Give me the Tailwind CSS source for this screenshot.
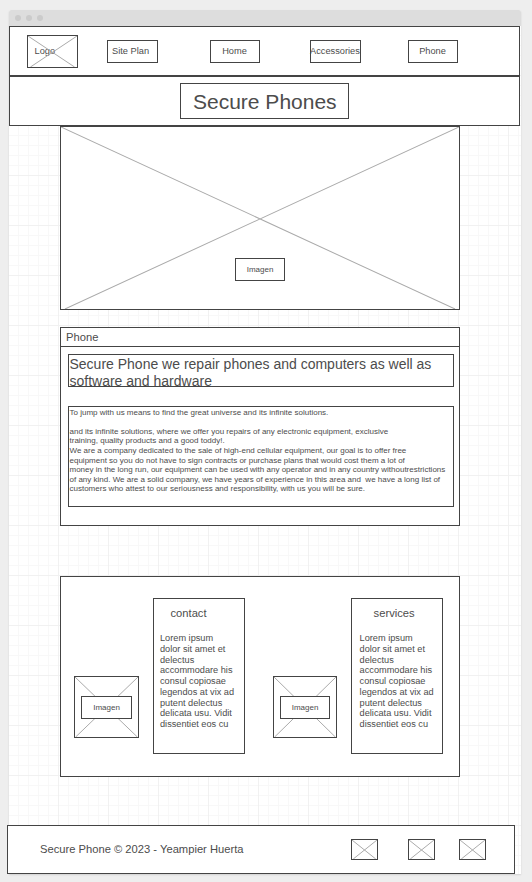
<!DOCTYPE html>
<html lang="en">
<head>
<meta charset="utf-8">
<title>Secure Phones</title>
<script src="https://cdn.jsdelivr.net/npm/@tailwindcss/browser@4"></script>
</head>
<body class="h-[882px] w-[532px] overflow-hidden bg-[#eeeeee] pt-[10px] font-['Liberation_Sans',Arial,sans-serif] text-[#4c4c4c]">
<svg class="hidden">
  <symbol id="cross" viewBox="0 0 100 100" preserveAspectRatio="none">
    <path d="M0 0L99 100M100 0L1 100" fill="none" stroke="#aaaaaa" stroke-width="1" vector-effect="non-scaling-stroke"/>
  </symbol>
  <symbol id="cross-small" viewBox="0 0 100 100" preserveAspectRatio="none">
    <path d="M0 0L95 100M100 0L5 100" fill="none" stroke="#aaaaaa" stroke-width="1" vector-effect="non-scaling-stroke"/>
  </symbol>
</svg>
<div class="ml-[9px] flex h-[864px] w-[512px] flex-col rounded-t-[2px] bg-white bg-[linear-gradient(to_right,#f1f1f1_1px,transparent_1px),linear-gradient(to_bottom,#f1f1f1_1px,transparent_1px),linear-gradient(to_right,#f8f8f8_1px,transparent_1px),linear-gradient(to_bottom,#f8f8f8_1px,transparent_1px)] bg-[size:50px_50px,50px_50px,10px_10px,10px_10px] bg-[position:-1px_15px,-1px_15px,-1px_5px,-1px_5px] shadow-[0_1px_2px_rgba(0,0,0,0.12)]">
  <div class="flex h-4 shrink-0 items-center gap-[5px] rounded-t-[2px] bg-[#dddddd] pl-[6px]">
    <span class="size-[6px] rounded-full bg-[#cbcbcb]"></span>
    <span class="size-[6px] rounded-full bg-[#cbcbcb]"></span>
    <span class="size-[6px] rounded-full bg-[#cbcbcb]"></span>
  </div>

  <nav class="flex h-[50px] w-[511px] shrink-0 items-start border border-[#444444] bg-white pl-[17px] pt-[8px] text-[9.25px] leading-[11px]">
    <div class="grid h-[33px] w-[51px] border border-[#444444]">
      <span class="col-start-1 row-start-1 pl-[6.5px] pt-[10px]">Logo</span>
      <svg class="col-start-1 row-start-1 h-full w-full"><use href="#cross-small"/></svg>
    </div>
    <a class="ml-[29px] mt-[5px] h-[23px] w-[51px] whitespace-nowrap border border-[#444444] pl-[4px] pt-[5px]">Site Plan</a>
    <a class="ml-[52px] mt-[5px] h-[23px] w-[50px] border border-[#444444] pr-px pt-[5px] text-center">Home</a>
    <a class="ml-[50px] mt-[5px] h-[23px] w-[51px] whitespace-nowrap border border-[#444444] pt-[5px]"><span class="-ml-px">Accessories</span></a>
    <a class="ml-[47px] mt-[5px] h-[23px] w-[50px] border border-[#444444] pr-px pt-[5px] text-center">Phone</a>
  </nav>

  <header class="h-[50px] w-[511px] shrink-0 border border-[#444444] bg-white pl-[170px] pt-[6px]">
    <h1 class="h-[36px] w-[169px] whitespace-nowrap border border-[#444444] pl-[12px] pt-[6px] text-[21px] leading-[24px]">Secure Phones</h1>
  </header>

  <main class="ml-[51px] flex w-[400px] flex-col">
    <section class="grid h-[184px] border border-[#444444] bg-white">
      <svg class="col-start-1 row-start-1 h-[182px] w-full"><use href="#cross"/></svg>
      <div class="col-start-1 row-start-1 ml-[174px] mt-[131px] h-[23px] w-[50px] border border-[#444444] bg-white pt-[6px] text-center text-[8px] leading-[10px]">Imagen</div>
    </section>

    <section class="mt-[17px] h-[199px] border border-[#444444] bg-white">
      <div class="h-[19px] border-b border-[#444444] pl-[5px] pt-[3px] text-[11.2px] leading-[13px]">Phone</div>
      <h2 class="ml-[7px] mt-[7px] h-[33px] w-[386px] whitespace-nowrap border border-[#444444] pl-[0.5px] pt-px text-[14px] leading-[17px]">Secure Phone we repair phones and computers as well as<br>software and hardware</h2>
      <p class="ml-[7px] mt-[19px] h-[101px] w-[386px] whitespace-pre border border-[#444444] pl-[0.5px] pt-[0.6px] text-[8px] leading-[9.6px]">To jump with us means to find the great universe and its infinite solutions.

and its infinite solutions, where we offer you repairs of any electronic equipment, exclusive
training, quality products and a good toddy!.
We are a company dedicated to the sale of high-end cellular equipment, our goal is to offer free
equipment so you do not have to sign contracts or purchase plans that would cost them a lot of
money in the long run, our equipment can be used with any operator and in any country withoutrestrictions
of any kind. We are a solid company, we have years of experience in this area and  we have a long list of
customers who attest to our seriousness and responsibility, with us you will be sure.</p>
    </section>

    <section class="mt-[50px] flex h-[201px] items-start border border-[#444444] bg-white pt-[21px]">
      <div class="ml-[13px] mt-[78px] grid h-[62px] w-[65px] border border-[#444444]">
        <svg class="col-start-1 row-start-1 h-[60px] w-full"><use href="#cross"/></svg>
        <div class="col-start-1 row-start-1 ml-[6px] mt-[19px] h-[23px] w-[51px] border border-[#444444] bg-white pt-[6px] text-center text-[8px] leading-[10px]">Imagen</div>
      </div>
      <article class="ml-[14px] h-[156px] w-[92px] whitespace-nowrap border border-[#444444] pl-[6px] pt-[8px]">
        <h3 class="pl-[10.5px] text-[11.2px] leading-[13px]">contact</h3>
        <p class="mt-[13px] text-[9.2px] leading-[10.75px]">Lorem ipsum<br>dolor sit amet et<br>delectus<br>accommodare his<br>consul copiosae<br>legendos at vix ad<br>putent delectus<br>delicata usu. Vidit<br>dissentiet eos cu</p>
      </article>
      <div class="ml-[28px] mt-[78px] grid h-[62px] w-[64px] border border-[#444444]">
        <svg class="col-start-1 row-start-1 h-[60px] w-full"><use href="#cross"/></svg>
        <div class="col-start-1 row-start-1 ml-[6px] mt-[19px] h-[23px] w-[50px] border border-[#444444] bg-white pt-[6px] text-center text-[8px] leading-[10px]">Imagen</div>
      </div>
      <article class="ml-[14px] h-[156px] w-[92px] whitespace-nowrap border border-[#444444] pl-[7.6px] pt-[8px]">
        <h3 class="pl-[14px] text-[11.2px] leading-[13px]">services</h3>
        <p class="mt-[13px] text-[9.2px] leading-[10.75px]">Lorem ipsum<br>dolor sit amet et<br>delectus<br>accommodare his<br>consul copiosae<br>legendos at vix ad<br>putent delectus<br>delicata usu. Vidit<br>dissentiet eos cu</p>
      </article>
    </section>
  </main>

  <footer class="-ml-[2px] mt-[48px] flex h-[49px] w-[508px] shrink-0 items-start border border-[#444444] bg-white pt-[13px]">
    <span class="ml-[32px] mt-[4px] w-[311px] whitespace-nowrap text-[11.2px] leading-[13px]">Secure Phone © 2023 - Yeampier Huerta</span>
    <div class="h-[21px] w-[27px] border border-[#444444]"><svg class="block h-full w-full"><use href="#cross-small"/></svg></div>
    <div class="ml-[30px] h-[21px] w-[27px] border border-[#444444]"><svg class="block h-full w-full"><use href="#cross-small"/></svg></div>
    <div class="ml-[24px] h-[21px] w-[27px] border border-[#444444]"><svg class="block h-full w-full"><use href="#cross-small"/></svg></div>
  </footer>
</div>
</body>
</html>
